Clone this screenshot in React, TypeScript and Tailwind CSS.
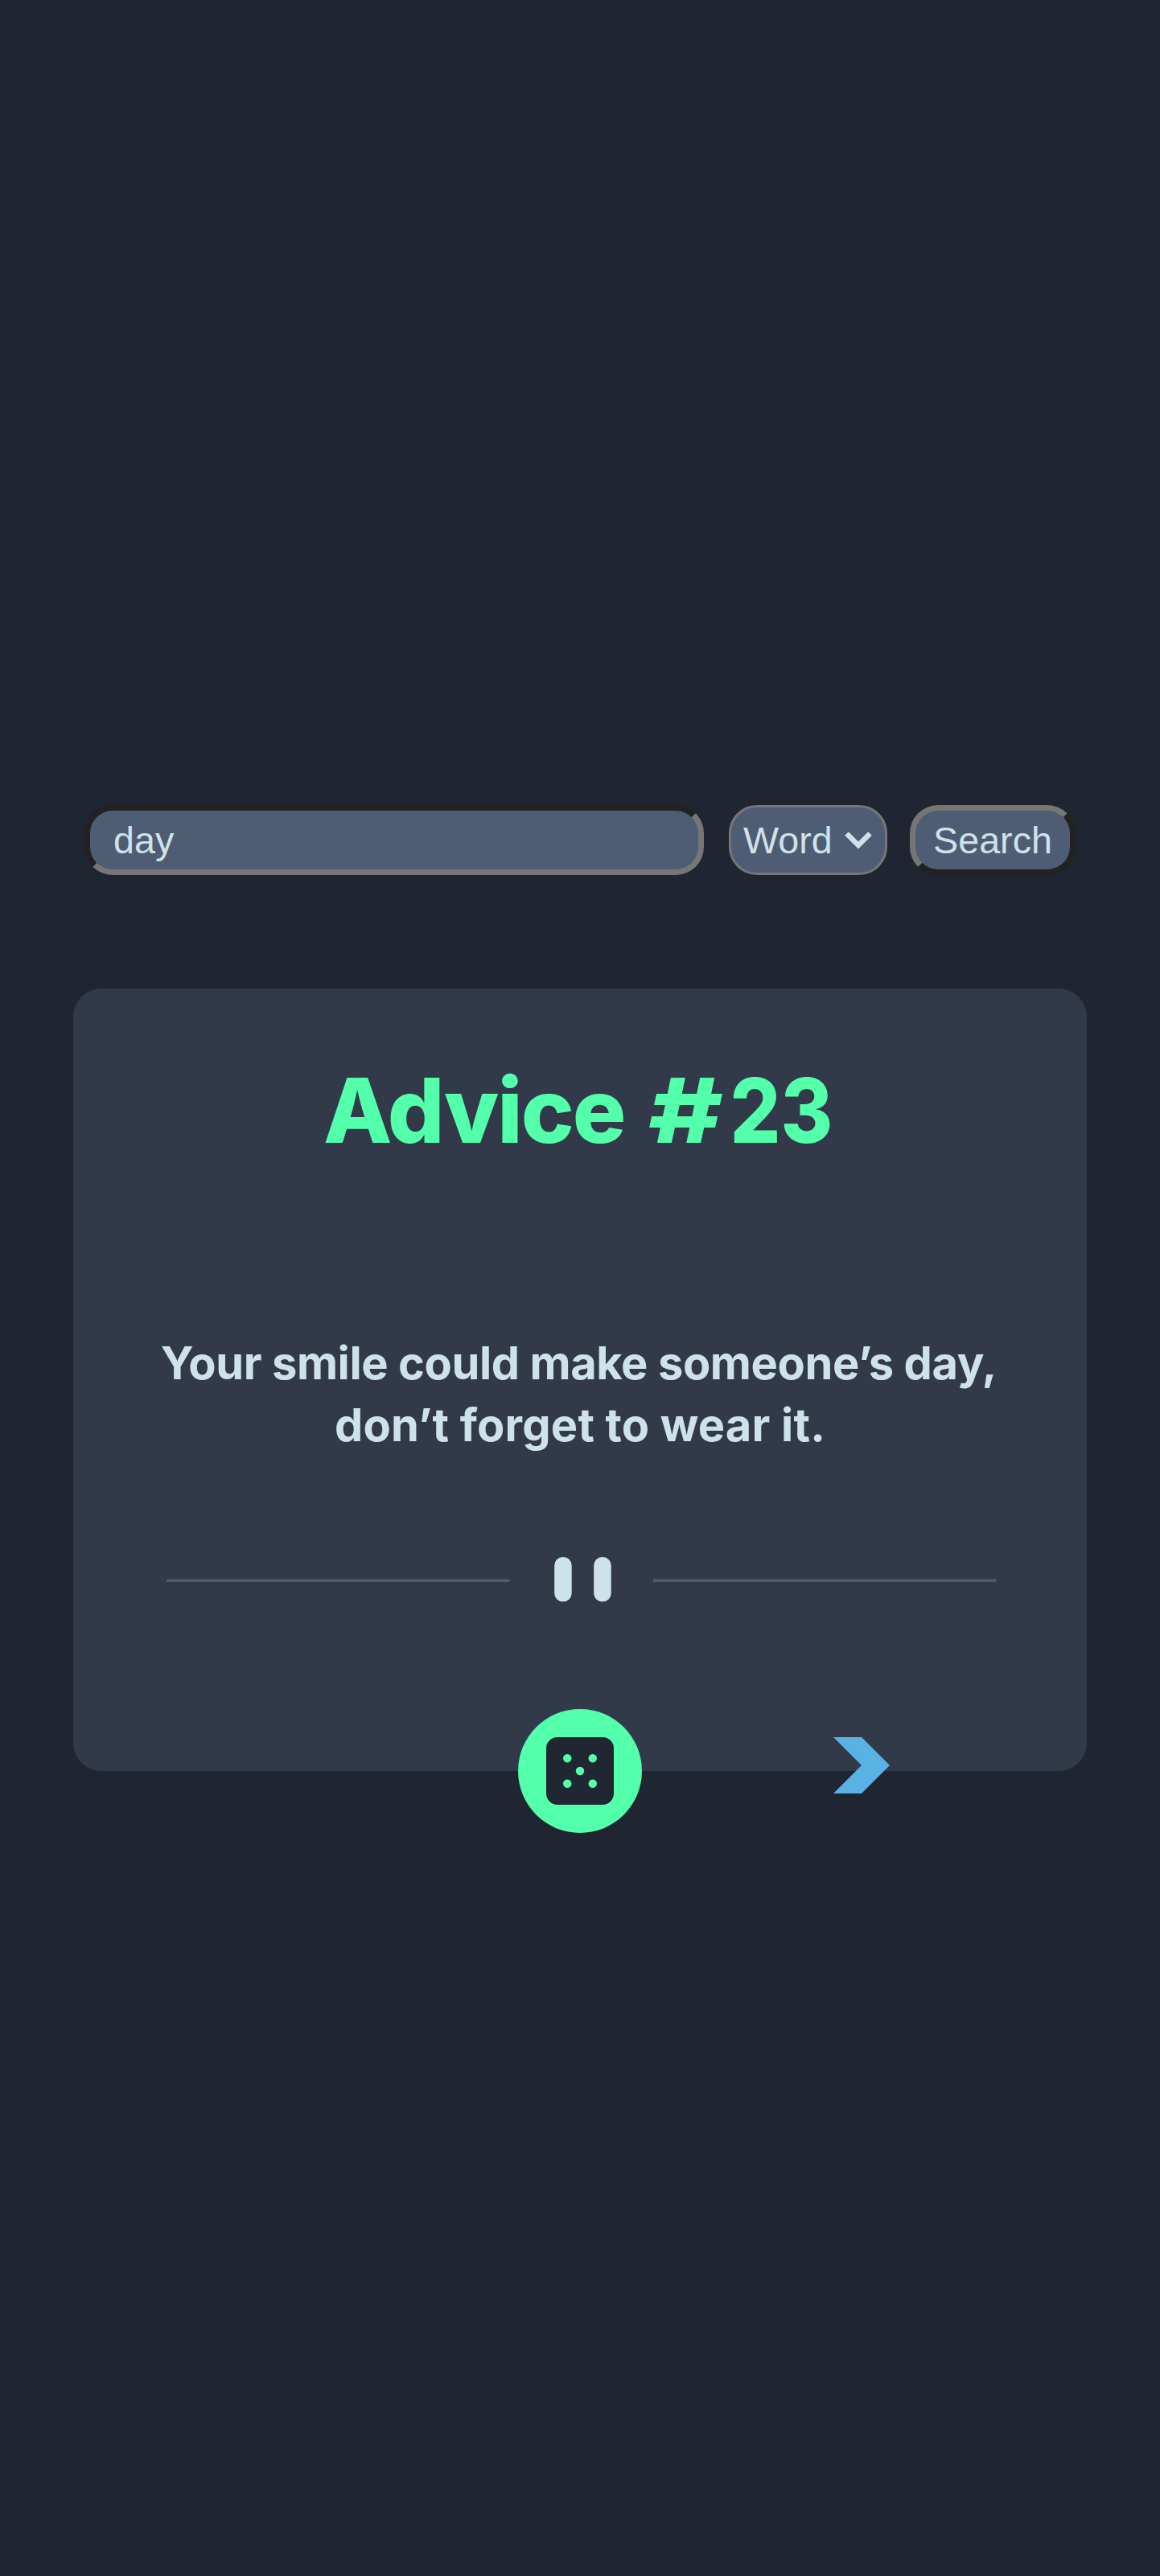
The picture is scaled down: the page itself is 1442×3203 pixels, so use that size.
function Divider() {
  return (
    <svg className="ml-[116px] block h-[56px] w-[1032px]" viewBox="0 0 1032 56" fill="none">
      <path fill="#4F5D74" d="M0 27.5h426.500v3.500H0zM605 27.5h426.500v3.500H605z" />
      <rect x="482.200" y="0" width="21.500" height="55.500" rx="10.500" fill="#CEE3E9" />
      <rect x="531.200" y="0" width="21.500" height="55.500" rx="10.500" fill="#CEE3E9" />
    </svg>
  );
}

function Dice() {
  return (
    <svg className="h-[84px] w-[84px]" viewBox="0 0 24 24">
      <path
        fill="#202733"
        d="M20 0H4a4.005 4.005 0 0 0-4 4v16a4.005 4.005 0 0 0 4 4h16a4.005 4.005 0 0 0 4-4V4a4.005 4.005 0 0 0-4-4ZM7.5 18a1.5 1.5 0 1 1 0-3 1.5 1.5 0 0 1 0 3Zm0-9a1.5 1.5 0 1 1 0-3 1.5 1.5 0 0 1 0 3Zm4.5 4.5a1.5 1.5 0 1 1 0-3 1.5 1.5 0 0 1 0 3Zm4.5 4.5a1.5 1.5 0 1 1 0-3 1.5 1.5 0 0 1 0 3Zm0-9a1.5 1.5 0 1 1 0-3 1.5 1.5 0 0 1 0 3Z"
      />
    </svg>
  );
}

export default function App() {
  return (
    <main className="h-[3203px] w-[1442px] overflow-hidden bg-[#1F2632] pt-[1001px]">
      <form
        className="ml-[105px] flex h-[87px] text-[46.667px] leading-[54px] text-[#CEE3E9] [font-family:'Liberation_Sans',Arial,sans-serif]"
        onSubmit={(e) => e.preventDefault()}
      >
        <input
          type="text"
          defaultValue="day"
          className="h-[87px] w-[770px] rounded-[35px] border-[7px] border-t-[#222222] border-r-[#767676] border-b-[#767676] border-l-[#222222] bg-[#4F5D74] px-[29px] outline-none"
        />
        <button
          type="button"
          className="ml-[31px] flex h-[87px] w-[197px] items-center rounded-[35px] border-[3px] border-[#767676] bg-[#4F5D74] pl-[15px]"
        >
          Word
          <svg className="ml-[15px] h-[22px] w-[34px] shrink-0" viewBox="0 0 34 22" fill="none">
            <path d="M2.5 2.5 17 17 31.500 2.500" stroke="#CEE3E9" strokeWidth="6.500" />
          </svg>
        </button>
        <button
          type="submit"
          className="ml-[28px] h-[87px] w-[206px] rounded-[35px] border-[7px] border-t-[#767676] border-r-[#222222] border-b-[#222222] border-l-[#767676] bg-[#4F5D74] text-center"
        >
          Search
        </button>
      </form>

      <section className="relative mt-[140.5px] ml-[91px] h-[973px] w-[1260px] rounded-[35px] bg-[#323A49] pt-[75.5px] text-center [font-family:Inter,sans-serif]">
        <h1 className="flex pl-[311px] text-[111px] leading-[153px] font-extrabold text-[#53FFAA]">
          <span className="w-[405px] text-left tracking-[-2px] whitespace-pre">Advice </span>
          <span className="flex w-[91px] scale-x-128 justify-center">#</span>
          <span className="ml-[12px] flex w-[123px] scale-x-89 justify-center">23</span>
        </h1>
        <p className="mt-[200px] text-[56px] leading-[77px] font-bold whitespace-nowrap text-[#CEE3E9]">
          <span className="block pr-[3px] tracking-[-0.4px]">Your smile could make someone’s day,</span>
          <span className="block tracking-[0.2px]">don’t forget to wear it.</span>
        </p>
        <div className="mt-[125px]">
          <Divider />
        </div>
        <button
          type="button"
          className="absolute -bottom-[77px] left-[553px] flex h-[154px] w-[154px] items-center justify-center rounded-full bg-[#53FFAA]"
        >
          <Dice />
        </button>
        <svg
          className="absolute -bottom-[28px] left-[945px] h-[70px] w-[70px]"
          viewBox="0 0 70 70"
        >
          <path fill="#59B1E4" d="M0 0h35l35 35-35 35H0l35-35z" />
        </svg>
      </section>
    </main>
  );
}
